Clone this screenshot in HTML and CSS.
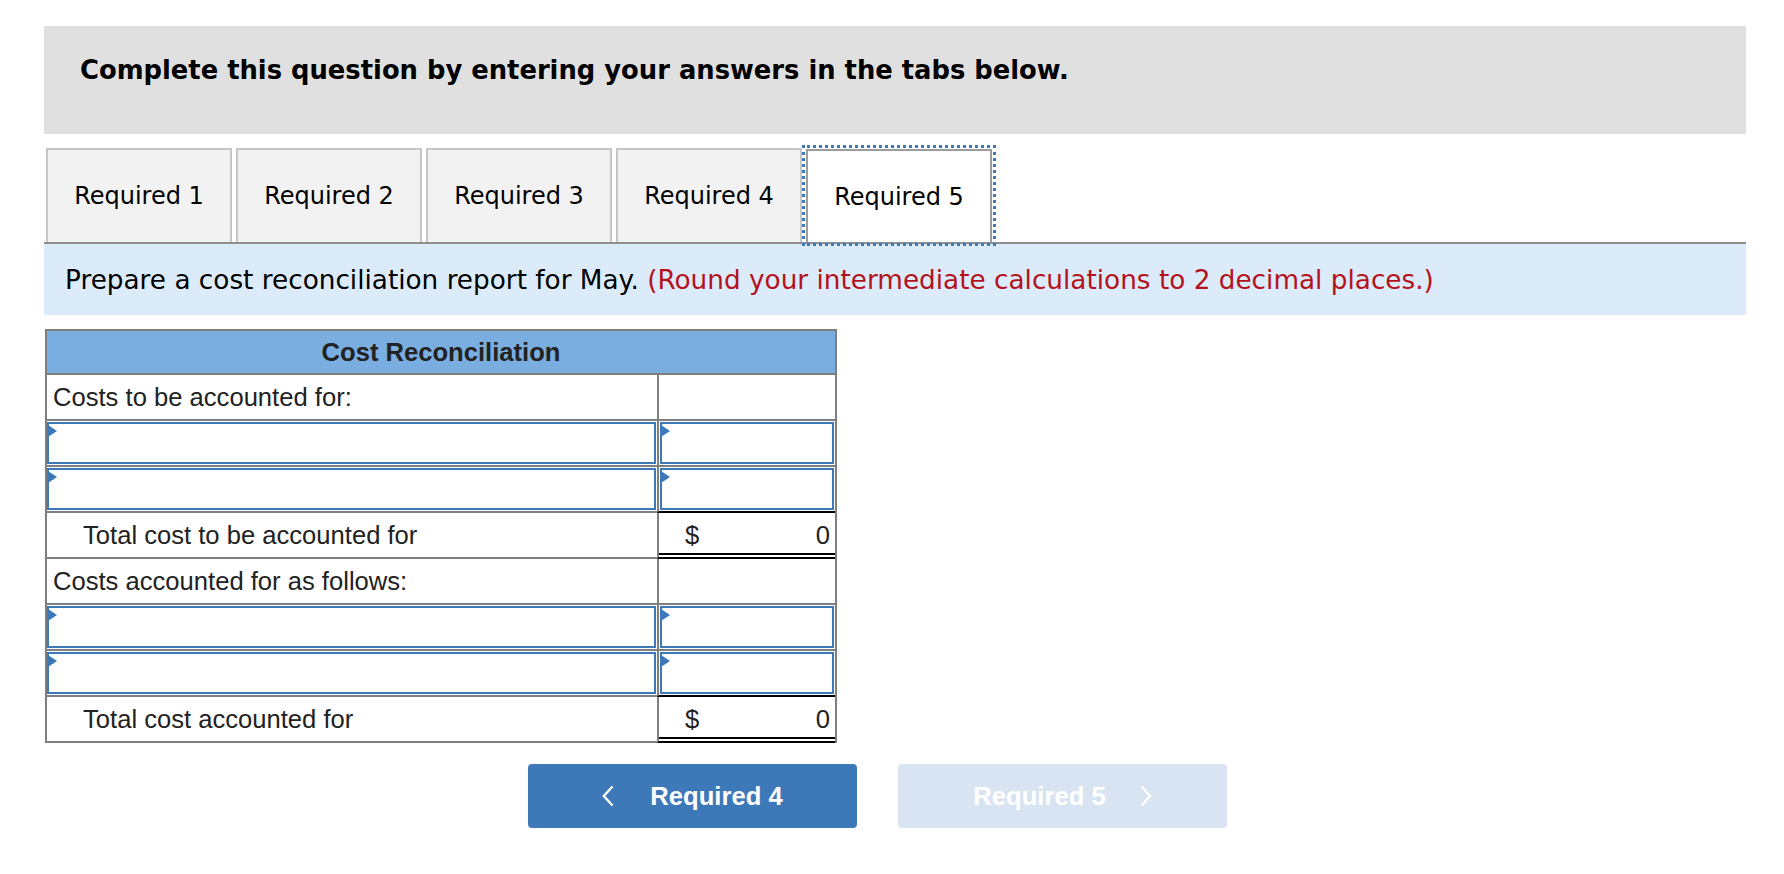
FILE: index.html
```html
<!DOCTYPE html>
<html lang="en">
<head>
<meta charset="utf-8">
<title>Cost Reconciliation</title>
<link rel="stylesheet" href="styles.css">
</head>
<body>
<div class="page">
  <div class="intro">
    <h1 class="intro-title">Complete this question by entering your answers in the tabs below.</h1>
  </div>

  <div class="tabs">
    <div class="tab">Required 1</div>
    <div class="tab">Required 2</div>
    <div class="tab">Required 3</div>
    <div class="tab">Required 4</div>
    <div class="tab tab-active">Required 5</div>
  </div>

  <div class="instructions">
    <p class="instructions-text">Prepare a cost reconciliation report for May. <span class="note">(Round your intermediate calculations to 2 decimal places.)</span></p>
  </div>

  <div class="recon">
    <div class="recon-head">Cost Reconciliation</div>

    <div class="recon-row">
      <div class="cell cell-label">Costs to be accounted for:</div>
      <div class="cell cell-amount"></div>
    </div>
    <div class="recon-row">
      <div class="cell cell-input"><div class="input"></div></div>
      <div class="cell cell-amount cell-input"><div class="input"></div></div>
    </div>
    <div class="recon-row">
      <div class="cell cell-input"><div class="input"></div></div>
      <div class="cell cell-amount cell-input above-total"><div class="input"></div></div>
    </div>
    <div class="recon-row">
      <div class="cell cell-label indent">Total cost to be accounted for</div>
      <div class="cell cell-amount total"><span>$</span><span>0</span></div>
    </div>

    <div class="recon-row">
      <div class="cell cell-label">Costs accounted for as follows:</div>
      <div class="cell cell-amount"></div>
    </div>
    <div class="recon-row">
      <div class="cell cell-input"><div class="input"></div></div>
      <div class="cell cell-amount cell-input"><div class="input"></div></div>
    </div>
    <div class="recon-row">
      <div class="cell cell-input"><div class="input"></div></div>
      <div class="cell cell-amount cell-input above-total"><div class="input"></div></div>
    </div>
    <div class="recon-row">
      <div class="cell cell-label indent">Total cost accounted for</div>
      <div class="cell cell-amount total"><span>$</span><span>0</span></div>
    </div>
  </div>

  <div class="nav">
    <button class="nav-btn nav-prev" type="button">
      <svg class="chev" width="12" height="22" viewBox="0 0 12 22"><polyline points="10.5,1.5 1.8,11 10.5,20.5" fill="none" stroke="#fff" stroke-width="2.4"/></svg>
      <span>Required 4</span>
    </button>
    <button class="nav-btn nav-next" type="button">
      <span>Required 5</span>
      <svg class="chev" width="12" height="22" viewBox="0 0 12 22"><polyline points="1.5,1.5 10.2,11 1.5,20.5" fill="none" stroke="#fff" stroke-width="2.4"/></svg>
    </button>
  </div>
</div>
</body>
</html>
```

FILE: styles.css
```css
* { box-sizing: border-box; }

body {
  margin: 0;
  background: #fff;
  font-family: "DejaVu Sans", Verdana, sans-serif;
  color: #000;
}

.page {
  padding: 26px 0 0 44px;
  width: 1746px;
}

/* Intro header */
.intro {
  background: #e0e0e0;
  height: 108px;
  padding: 25px 36px 0;
}
.intro-title {
  margin: 0;
  font-size: 25.8px;
  line-height: 38px;
  font-weight: bold;
}

/* Tabs */
.tabs {
  display: flex;
  margin-top: 14px;
  padding-left: 2px;
  height: 94px;
  border-bottom: 2px solid #8f8f8f;
  box-sizing: content-box;
}
.tab {
  width: 186px;
  height: 94px;
  margin-right: 4px;
  border: 2px solid #c6c6c6;
  border-bottom: none;
  background: #f2f2f2;
  display: flex;
  align-items: center;
  justify-content: center;
  font-size: 24px;
}
.tab-active {
  background: #fff;
  border-color: #9c9c9c;
  outline: 3px dotted #3d78b8;
  outline-offset: 1px;
  margin-top: 1px;
  height: 93px;
  position: relative;
  z-index: 1;
}

/* Instruction band */
.instructions {
  background: #dcebf9;
  height: 71px;
  padding: 0 0 0 21px;
  display: flex;
  align-items: center;
}
.instructions-text {
  margin: 0;
  font-size: 26.3px;
  line-height: 36px;
}
.note { color: #b3121c; }

/* Reconciliation table */
.recon {
  margin: 14px 0 0 1px;
  width: 792px;
  border: 2px solid #7f7f7f;
  border-bottom: none;
  font-family: "Liberation Sans", Arial, sans-serif;
  font-size: 25.6px;
  color: #222;
}
.recon-head {
  height: 44px;
  background: #7aade0;
  border-bottom: 2px solid #7f7f7f;
  display: flex;
  align-items: center;
  justify-content: center;
  font-weight: bold;
}
.recon-row {
  display: grid;
  grid-template-columns: 610px 1fr;
  height: 46px;
}
.cell {
  border-bottom: 2px solid #7f7f7f;
  display: flex;
  align-items: center;
}
.cell-label { padding-left: 6px; }
.cell-label.indent { padding-left: 36px; }
.cell-amount { border-left: 2px solid #7f7f7f; }

.cell-input {
  padding: 1px 1px 1px 0;
  align-items: stretch;
}
.cell-amount.cell-input { padding: 1px; }
.input {
  flex: 1;
  border: 2px solid #3d78b8;
  background: #fff;
  position: relative;
}
.input::before {
  content: "";
  position: absolute;
  left: -1px;
  top: 1px;
  border-left: 9px solid #3d78b8;
  border-top: 6px solid transparent;
  border-bottom: 6px solid transparent;
}
.above-total { border-bottom-color: #000; }

.total {
  justify-content: space-between;
  padding: 0 5px 0 26px;
  border-bottom: 2px solid #000;
  box-shadow: inset 0 -2px 0 #fff, inset 0 -4px 0 #000;
}

/* Navigation buttons */
.nav {
  display: flex;
  gap: 41px;
  margin-top: 21px;
  padding-left: 484px;
}
.nav-btn {
  width: 329px;
  height: 64px;
  border: none;
  border-radius: 4px;
  display: flex;
  align-items: center;
  justify-content: center;
  gap: 36px;
  font-family: "Liberation Sans", Arial, sans-serif;
  font-weight: bold;
  font-size: 25.6px;
  color: #fff;
  padding: 0;
}
.nav-prev { background: #3d78b8; }
.nav-next { background: #d9e4f2; gap: 34px; }
.chev { display: block; }
```
